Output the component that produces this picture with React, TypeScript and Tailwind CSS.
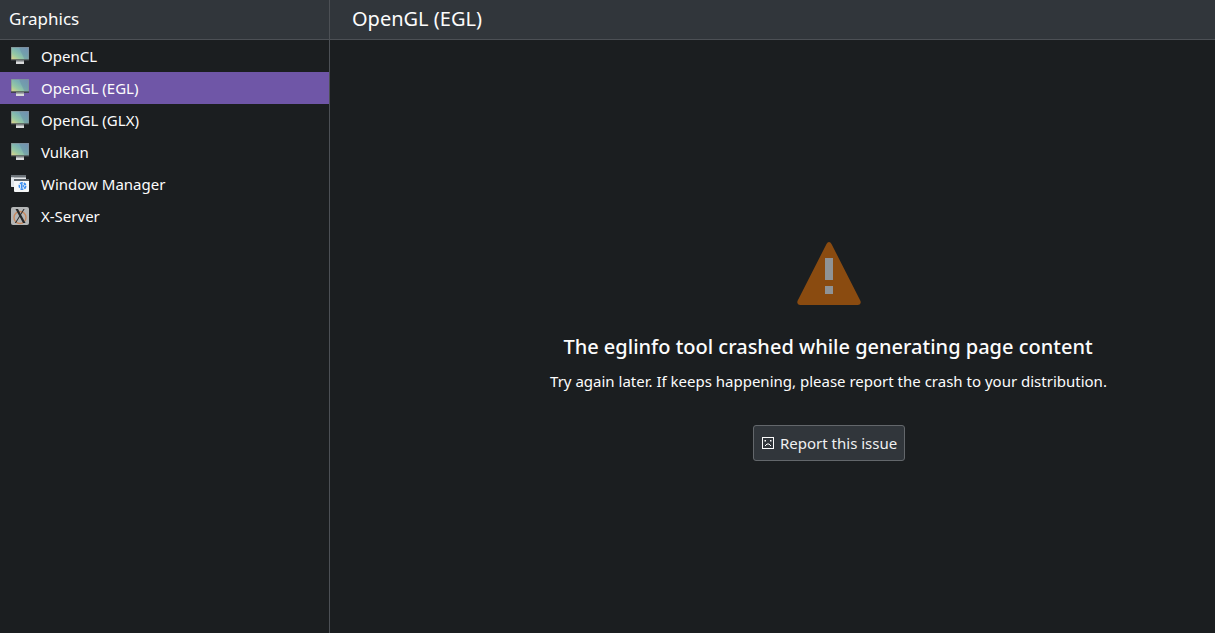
import React from "react";

const font = { fontFamily: '"Noto Sans", sans-serif' };

function Monitor({ id }: { id: string }) {
  return (
    <svg width="18" height="18" viewBox="0 0 18 18" className="shrink-0">
      <defs>
        <linearGradient id={id} x1="0" y1="1" x2="1" y2="0">
          <stop offset="0" stopColor="#e0d588" />
          <stop offset="0.3" stopColor="#95c8a4" />
          <stop offset="0.6" stopColor="#7ab0b4" />
          <stop offset="1" stopColor="#7b98bd" />
        </linearGradient>
      </defs>
      <rect x="0" y="0" width="18" height="13.5" fill="#868b8f" />
      <rect x="0.6" y="0.6" width="16.8" height="11.8" fill={`url(#${id})`} />
      <path d="M8 0.6 L17.4 0.6 L17.4 12.4 L13.5 12.4 Z" fill="#64809f" opacity="0.35" />
      <rect x="0" y="12.6" width="18" height="1" fill="#1f2224" />
      <rect x="5" y="13.6" width="8" height="3.4" fill="#d9dbdc" />
      <rect x="5" y="13.6" width="8" height="1" fill="#85898c" />
    </svg>
  );
}

function WindowIcon() {
  return (
    <svg width="18" height="18" viewBox="0 0 18 18" className="shrink-0">
      <rect x="0" y="0" width="15" height="12" rx="1" fill="#e8ebed" />
      <rect x="0" y="0" width="15" height="2.5" fill="#6b7278" />
      <rect x="3" y="4" width="15" height="13" rx="1" fill="#f5f7f8" />
      <rect x="3" y="4" width="15" height="2" fill="#5a6167" />
      <rect x="0" y="2.5" width="3" height="9" fill="#dfe4e8" />
      <circle cx="11.5" cy="11" r="3.2" fill="none" stroke="#3d8ff0" strokeWidth="1.6" strokeDasharray="3 1" />
      <path d="M10 8.5 v5 h1.5 v-5 z M11.5 11 l2.2 -2.5 h1.2 l-2.2 2.5 l2.2 2.5 h-1.2 z" fill="#3d8ff0" />
    </svg>
  );
}

function XIcon() {
  return (
    <svg width="18" height="18" viewBox="0 0 18 18" className="shrink-0">
      <rect x="0" y="0" width="18" height="18" rx="2" fill="#b4b6b6" />
      <circle cx="9" cy="10.5" r="6" fill="none" stroke="#c98a60" strokeWidth="1.4" />
      <path d="M4.5 2 L7 2 L14.5 16 L12 16 Z" fill="#26282a" />
      <path d="M12.5 2 L13.6 2 L5 16 L3.9 16 Z" fill="#26282a" />
    </svg>
  );
}

const items: { label: string; icon: React.ReactNode; active?: boolean }[] = [
  { label: "OpenCL", icon: <Monitor id="m1" /> },
  { label: "OpenGL (EGL)", icon: <Monitor id="m2" />, active: true },
  { label: "OpenGL (GLX)", icon: <Monitor id="m3" /> },
  { label: "Vulkan", icon: <Monitor id="m4" /> },
  { label: "Window Manager", icon: <WindowIcon /> },
  { label: "X-Server", icon: <XIcon /> },
];

export default function App() {
  return (
    <div className="flex h-[633px] w-[1215px] overflow-hidden bg-[#1b1e20] text-[#fcfcfc]" style={font}>
      <aside className="flex w-[330px] shrink-0 flex-col border-r border-[#4c5055]">
        <div className="flex h-[40px] shrink-0 items-center border-b border-[#4c5055] bg-[#31363b] pb-[1px] pl-[9px] text-[17px]">
          Graphics
        </div>
        <ul className="flex flex-col">
          {items.map((it) => (
            <li
              key={it.label}
              className={`flex h-[32px] items-center gap-[12px] pl-[11px] text-[15px] ${it.active ? "bg-[#6f56a7]" : ""}`}
            >
              {it.icon}
              <span>{it.label}</span>
            </li>
          ))}
        </ul>
      </aside>
      <main className="flex min-w-0 flex-1 flex-col">
        <div className="flex h-[40px] shrink-0 items-center border-b border-[#4c5055] bg-[#31363b] pb-[1px] pl-[22px] text-[20px]">
          OpenGL (EGL)
        </div>
        <div className="flex flex-1 flex-col items-center pl-[113px] pt-[200px]">
          <svg width="66" height="66" viewBox="0 0 66 66" className="shrink-0">
            <path d="M33 2 Q34.5 2 35.5 4 L64.5 61 Q65.5 64.5 62 65 L4 65 Q0.5 64.5 1.5 61 L30.5 4 Q31.5 2 33 2 Z" fill="#8a4b10" />
            <rect x="29" y="18" width="8" height="22" fill="#8f9396" />
            <rect x="29" y="46" width="8" height="8" fill="#8f9396" />
          </svg>
          <div className="mt-[26px] whitespace-nowrap pr-[2px] text-[20px] font-medium leading-[30px]">The eglinfo tool crashed while generating page content</div>
          <div className="mt-[9px] whitespace-nowrap pr-[1px] text-[15px] leading-[20px]">Try again later. If keeps happening, please report the crash to your distribution.</div>
          <button className="mt-[34px] flex h-[36px] w-[152px] items-center gap-[6px] rounded-[3px] border border-[#63676b] bg-[#31363b] pl-[8px] text-[15px] text-[#eff0f1]">
            <svg width="12" height="12" viewBox="0 0 12 12" fill="none" stroke="#fcfcfc" strokeWidth="1">
              <rect x="0.5" y="0.5" width="11" height="11" />
              <rect x="2.5" y="3" width="1.5" height="1.5" fill="#fcfcfc" stroke="none" />
              <rect x="8" y="3" width="1.5" height="1.5" fill="#fcfcfc" stroke="none" />
              <path d="M3 9 L5 7 L7 7 L9 9" />
            </svg>
            Report this issue
          </button>
        </div>
      </main>
    </div>
  );
}
